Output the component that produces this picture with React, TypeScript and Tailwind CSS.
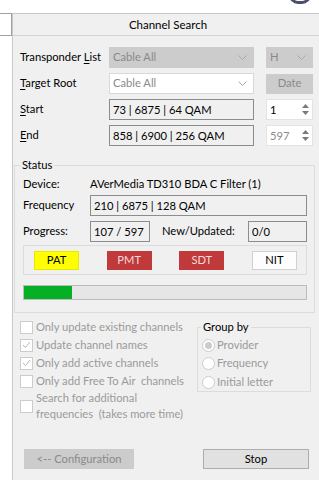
import React from "react";

const font = { fontFamily: 'Lato, "Noto Sans", sans-serif' };

function Combo({ text, disabled, className }: { text: string; disabled?: boolean; className?: string }) {
  return (
    <div
      className={`flex items-center h-full pl-[3px] pr-[6px] border ${
        disabled ? "bg-[#cccccc] border-[#cccccc]" : "bg-white border-[#d9d9d9]"
      } text-[#8a8a8a] ${className ?? ""}`}
    >
      <span className="flex-1">{text}</span>
      <svg width="9" height="6" viewBox="0 0 9 6" fill="none">
        <path d="M0.5 0.5 L4.5 4.5 L8.5 0.5" stroke="#a8a8a8" strokeWidth="1" />
      </svg>
    </div>
  );
}

function Spin({ value, muted }: { value: string; muted?: boolean }) {
  return (
    <div className="flex h-full ml-[12px] bg-white border border-[#e3e3e3]">
      <span className={`flex-1 pl-[3px] leading-[19px] ${muted ? "text-[#8a8a8a]" : "text-black"}`}>{value}</span>
      <div className="w-[14px] flex flex-col items-center justify-center gap-[3px]">
        <svg width="7" height="4" viewBox="0 0 7 4"><path d="M0 4 L3.5 0 L7 4Z" fill="#7a7a7a" /></svg>
        <svg width="7" height="4" viewBox="0 0 7 4"><path d="M0 0 L3.5 4 L7 0Z" fill="#7a7a7a" /></svg>
      </div>
    </div>
  );
}

function Check({ checked, children }: { checked?: boolean; children: React.ReactNode }) {
  return (
    <div className="flex items-center gap-[3px] min-h-[18px] whitespace-nowrap">
      <div className="w-[13px] h-[13px] shrink-0 bg-white border border-[#cccccc] flex items-center justify-center">
        {checked && (
          <svg width="9" height="8" viewBox="0 0 9 8" fill="none">
            <path d="M1 4 L3.5 6.5 L8 1" stroke="#b5b5b5" strokeWidth="1" />
          </svg>
        )}
      </div>
      <span>{children}</span>
    </div>
  );
}

function Radio({ checked, children }: { checked?: boolean; children: React.ReactNode }) {
  return (
    <div className="flex items-center gap-[2px] h-[18.5px]">
      <div className="w-[13px] h-[13px] rounded-full bg-white border border-[#cccccc] flex items-center justify-center">
        {checked && <div className="w-[7px] h-[7px] rounded-full bg-[#cccccc]" />}
      </div>
      <span>{children}</span>
    </div>
  );
}

function U({ children }: { children: React.ReactNode }) {
  return <span className="underline underline-offset-2">{children}</span>;
}

export default function App() {
  return (
    <div className="relative w-[319px] h-[480px] bg-white overflow-hidden text-[11.2px] text-black" style={font}>
      <div className="absolute right-[8px] top-[-14px] w-[22px] h-[18px] rounded-full border-[3px] border-[#4a4f6a]" />
      <div className="flex h-full pt-[13px]">
        {/* left strip */}
        <div className="w-[13px] flex flex-col">
          <div className="h-[23px] border-t border-b border-r border-[#a0a0a0] bg-white" />
        </div>
        {/* main panel */}
        <div className="flex-1 flex flex-col bg-[#f0f0f0] border-l border-t border-[#c8c8c8]">
          <div className="h-[22px] border-b border-[#d4d4d4] flex items-center justify-center pl-[4px] text-[11.5px]">Channel Search</div>

          <div className="grid grid-cols-[89px_145px_59px] gap-y-[5px] pl-[7px] pt-[11px] auto-rows-[21px] items-center whitespace-nowrap">
            <span>Transponder <U>L</U>ist</span>
            <Combo text="Cable All" disabled />
            <div className="ml-[12px] h-full"><Combo text="H" disabled /></div>

            <span><U>T</U>arget Root</span>
            <Combo text="Cable All" className="h-[20px]" />
            <div className="ml-[12px] h-[20px] bg-[#cccccc] text-[#8a8a8a] flex items-center justify-center">Date</div>

            <span><U>S</U>tart</span>
            <div className="h-full border border-[#8c8c8c] pl-[3px] leading-[19px]">73 | 6875 | 64 QAM</div>
            <Spin value="1" />

            <span><U>E</U>nd</span>
            <div className="h-full border border-[#8c8c8c] pl-[3px] leading-[19px]">858 | 6900 | 256 QAM</div>
            <Spin value="597" muted />
          </div>

          {/* Status group */}
          <div className="relative mt-[19px] ml-[1px] mr-[4px] border border-[#dcdcdc] pl-[8px] pr-[7px] pt-[8px] pb-[12px] whitespace-nowrap">
            <span className="absolute left-[5px] top-[-9px] bg-[#f0f0f0] px-[2px]">Status</span>
            <div className="flex items-center h-[20px]">
              <span className="w-[67px]">Device:</span>
              <span>AVerMedia TD310 BDA C Filter (1)</span>
            </div>
            <div className="flex items-center mt-[1px] h-[21px]">
              <span className="w-[67px]">Frequency</span>
              <div className="flex-1 h-full border border-[#8c8c8c] pl-[3px] leading-[19px]">210 | 6875 | 128 QAM</div>
            </div>
            <div className="flex items-center mt-[5px] h-[21px]">
              <span className="w-[67px]">Progress:</span>
              <div className="w-[60px] h-full border border-[#8c8c8c] pl-[3px] leading-[19px]">107 / 597</div>
              <span className="ml-[12px] w-[86px]">New/Updated:</span>
              <div className="w-[59px] h-full border border-[#8c8c8c] pl-[3px] leading-[19px]">0/0</div>
            </div>
            <div className="mt-[3px] h-[30px] border border-[#dcdcdc] flex items-center justify-between pl-[10px] pr-[9px]">
              <div className="w-[45px] h-[19px] bg-[#ffff00] border border-[#e8e800] flex items-center justify-center">PAT</div>
              <div className="w-[45px] h-[19px] bg-[#c0393b] text-[#f6dada] flex items-center justify-center">PMT</div>
              <div className="w-[45px] h-[19px] bg-[#c0393b] text-[#f6dada] flex items-center justify-center">SDT</div>
              <div className="w-[45px] h-[19px] bg-[#fdfdfd] border border-[#d0d0d0] flex items-center justify-center">NIT</div>
            </div>
            <div className="mt-[10px] h-[15px] bg-[#e6e6e6] border border-[#bcbcbc]">
              <div className="h-full w-[48px] bg-[#06b025]" />
            </div>
          </div>

          {/* options */}
          <div className="flex mt-[5px] pl-[7px] text-[#9a9a9a]">
            <div className="w-[177px] shrink-0 flex flex-col">
              <Check>Only update existing channels</Check>
              <Check checked>Update channel names</Check>
              <Check checked>Only add active channels</Check>
              <Check>Only add Free To Air&nbsp; channels</Check>
              <Check>
                <span className="block leading-[16px]">Search for additional</span>
                <span className="block leading-[16px]">frequencies&nbsp; (takes more time)</span>
              </Check>
            </div>
            <div className="relative shrink-0 mt-[9px] w-[114px] h-[65px] border border-[#dcdcdc] pl-[4px] pt-[8px] whitespace-nowrap">
              <span className="absolute left-[3px] top-[-9px] bg-[#f0f0f0] px-[2px] text-black">Group by</span>
              <Radio checked>Provider</Radio>
              <Radio>Frequency</Radio>
              <Radio>Initial letter</Radio>
            </div>
          </div>

          <div className="flex-1" />
          <div className="flex justify-between pl-[11px] pr-[10px] pb-[11px]">
            <div className="w-[110px] h-[20px] bg-[#cccccc] text-[#8a8a8a] flex items-center justify-center">&lt;-- Configuration</div>
            <div className="w-[106px] h-[20px] bg-[#e1e1e1] border border-[#adadad] flex items-center justify-center">Stop</div>
          </div>
        </div>
      </div>
    </div>
  );
}
